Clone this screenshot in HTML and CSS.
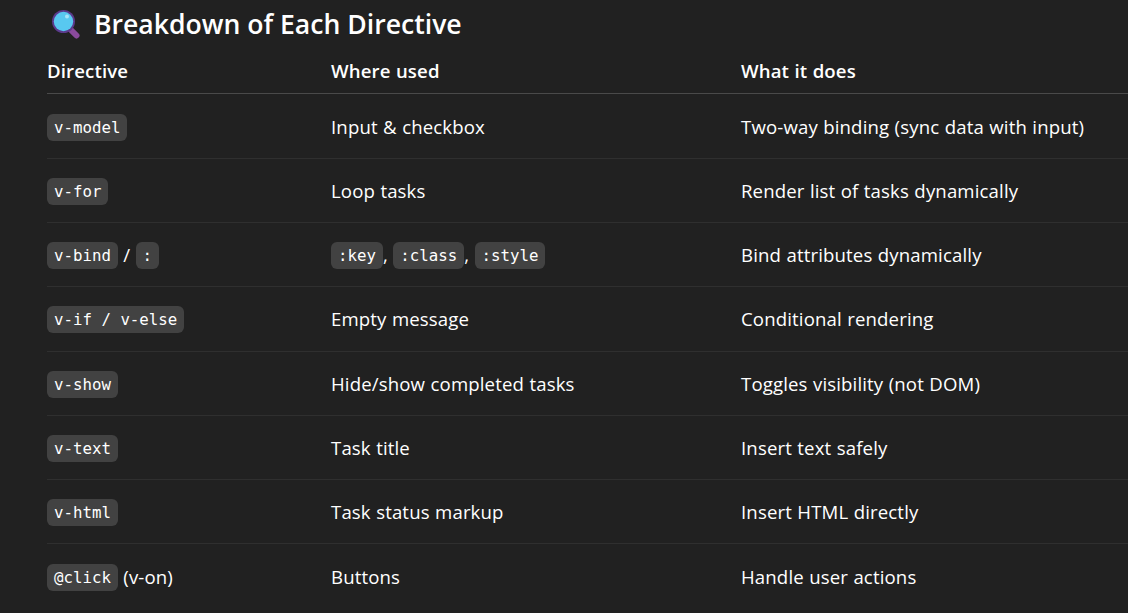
FILE: index.html
```html
<!DOCTYPE html>
<html lang="en">
<head>
<meta charset="utf-8">
<title>Breakdown of Each Directive</title>
<link rel="stylesheet" href="styles.css">
</head>
<body>
<main class="doc">
<h2 class="title"><svg class="lens" viewBox="0 0 30 30" width="30" height="30" aria-hidden="true"><path d="M19 20l6.5 6.5" stroke="#8a4a9c" stroke-width="6" stroke-linecap="round"/><circle cx="12.5" cy="12.5" r="11.5" fill="#5b3a8c"/><circle cx="12.5" cy="12.5" r="9.7" fill="#58c8f0"/><circle cx="16" cy="7.5" r="2" fill="#a8e4f8"/></svg><span>Breakdown of Each Directive</span></h2>
<table class="table">
<thead><tr><th>Directive</th><th>Where used</th><th>What it does</th></tr></thead>
<tbody>
<tr><td><code>v-model</code></td><td>Input &amp; checkbox</td><td>Two-way binding (sync data with input)</td></tr>
<tr><td><code>v-for</code></td><td>Loop tasks</td><td>Render list of tasks dynamically</td></tr>
<tr><td><code>v-bind</code> / <code>:</code></td><td><code>:key</code>, <code>:class</code>, <code>:style</code></td><td>Bind attributes dynamically</td></tr>
<tr><td><code>v-if / v-else</code></td><td>Empty message</td><td>Conditional rendering</td></tr>
<tr><td><code>v-show</code></td><td>Hide/show completed tasks</td><td>Toggles visibility (not DOM)</td></tr>
<tr><td><code>v-text</code></td><td>Task title</td><td>Insert text safely</td></tr>
<tr><td><code>v-html</code></td><td>Task status markup</td><td>Insert HTML directly</td></tr>
<tr><td><code>@click</code> (v-on)</td><td>Buttons</td><td>Handle user actions</td></tr>
</tbody>
</table>
</main>
</body>
</html>
```
FILE: styles.css
```css
html, body { margin: 0; height: 100%; overflow: hidden; background: #212121; }
body { color: #fff; font-family: "Open Sans", "Noto Sans", sans-serif; font-size: 18.6px; letter-spacing: 0.14px; word-spacing: 0.4px; }
.doc { padding: 0 0 0 47px; width: 1081px; }
.title { margin: 0; height: 47px; display: flex; align-items: center; gap: 13px; padding-left: 4px; font-size: 26.6px; font-weight: 600; letter-spacing: 0; word-spacing: 0; }
.lens { flex: none; }
.table { width: 100%; border-collapse: collapse; table-layout: fixed; }
.table th { height: 46.4px; padding: 0; text-align: left; font-weight: 600; border-bottom: 1px solid #4a4a4a; }
.table th:nth-child(1), .table td:nth-child(1) { width: 284px; }
.table th:nth-child(2), .table td:nth-child(2) { width: 410px; }
.table td { height: 63.3px; padding: 0; border-bottom: 1px solid #2f2f2f; }
.table tr:last-child td { border-bottom: 0; }
code { font-family: "DejaVu Sans Mono", monospace; font-size: 15.75px; letter-spacing: 0; word-spacing: 0; background: #424242; border-radius: 6px; padding: 4px 7px; vertical-align: 1px; }
```
